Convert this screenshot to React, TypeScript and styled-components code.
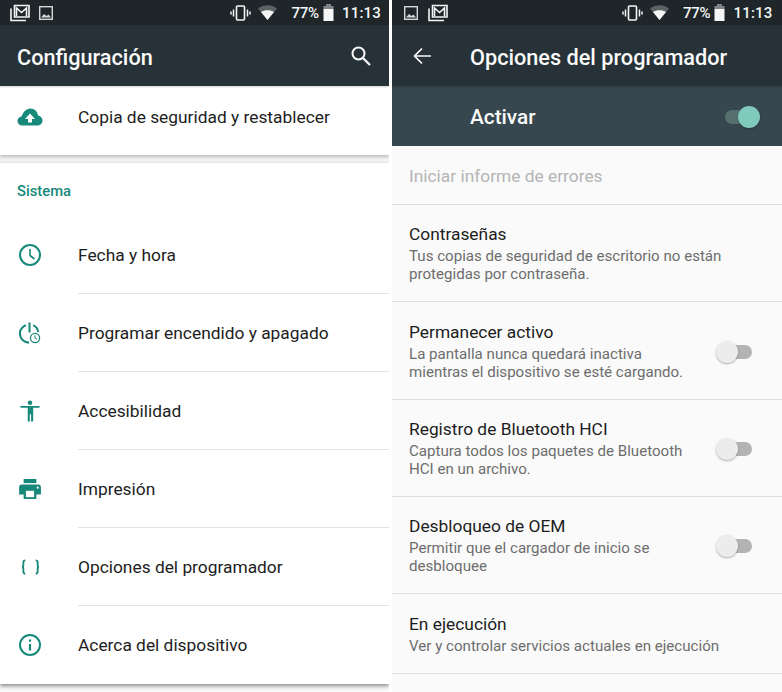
import React from 'react'
import styled, { createGlobalStyle } from 'styled-components'

const GlobalStyle = createGlobalStyle`
  html, body {
    margin: 0;
    padding: 0;
    background: #ffffff;
    font-family: Roboto, "Noto Sans", sans-serif;
  }
`

const TEAL = '#17897b'

const Page = styled.div`
  display: flex;
  justify-content: space-between;
  width: 782px;
  height: 692px;
  overflow: hidden;
`

const Phone = styled.div<{ $width: number; $bg: string }>`
  display: flex;
  flex-direction: column;
  width: ${(p) => p.$width}px;
  height: 692px;
  overflow: hidden;
  background: ${(p) => p.$bg};
`

const StatusBar = styled.div<{ $left: number; $right: number }>`
  display: flex;
  align-items: center;
  flex: none;
  height: 25px;
  padding: 0 ${(p) => p.$right}px 0 ${(p) => p.$left}px;
  background: #1f2629;
  color: #f4f6f6;
`

const NoteIcons = styled.div<{ $gap: number }>`
  display: flex;
  align-items: center;
  gap: ${(p) => p.$gap}px;
  flex: 1;
`

const Vibrate = styled.svg`
  width: 21px;
  height: 16px;
  margin-right: 7px;
`

const Wifi = styled.svg`
  width: 19px;
  height: 15px;
  margin-right: 14px;
`

const Percent = styled.span`
  font-size: 15px;
  font-weight: 500;
  letter-spacing: -0.2px;
`

const Battery = styled.svg`
  width: 11px;
  height: 17px;
  margin: 0 8px 0 4px;
`

const Clock = styled.span`
  font-size: 15px;
  font-weight: 500;
  letter-spacing: 0.2px;
`

const AppBar = styled.div`
  position: relative;
  z-index: 1;
  display: flex;
  align-items: center;
  flex: none;
  height: 61px;
  padding-left: 17px;
  padding-right: 16px;
  background: #263238;
  color: #fafafa;
  box-shadow: 0 1px 2px rgba(0, 0, 0, 0.18);
`

const AppTitle = styled.div`
  flex: 1;
  margin-top: 3px;
  font-size: 21.7px;
  font-weight: 500;
`

const BackSlot = styled.div`
  display: flex;
  align-items: center;
  width: 57px;
  margin-left: 4px;
`

const MasterBar = styled.div`
  display: flex;
  align-items: center;
  flex: none;
  height: 60px;
  box-sizing: border-box;
  padding: 2px 23px 0 78px;
  background: #37474f;
  color: #fafafa;
`

const MasterLabel = styled.div`
  flex: 1;
  font-size: 20.8px;
  font-weight: 500;
`

const Track = styled.div<{ $on?: boolean }>`
  position: relative;
  width: 34px;
  height: 14px;
  border-radius: 7px;
  background: ${(p) => (p.$on ? '#56706f' : '#b3b3b3')};
`

const OffTrack = styled(Track)`
  margin-top: 2px;
`

const Knob = styled.div<{ $on?: boolean }>`
  position: absolute;
  top: -4px;
  left: ${(p) => (p.$on ? '13px' : '-2px')};
  width: 22px;
  height: 22px;
  border-radius: 50%;
  background: ${(p) => (p.$on ? '#7fcabd' : '#ececec')};
  box-shadow: 0 1px 2px rgba(0, 0, 0, 0.3);
`

const CardGroup = styled.div`
  flex: none;
  background: #ffffff;
  box-shadow: 0 2px 3px rgba(0, 0, 0, 0.22);
`

const BottomCard = styled(CardGroup)`
  position: relative;
  box-shadow: 0 2px 4px rgba(0, 0, 0, 0.45);
`

const Spacer = styled.div`
  flex: 1;
  background: #f8f8f8;
`

const TopCard = styled(CardGroup)`
  height: 69px;
  box-sizing: border-box;
  padding-bottom: 7px;
  display: flex;
  align-items: center;
  margin-bottom: 8px;
`

const SectionHeader = styled.div`
  display: flex;
  align-items: center;
  height: 53px;
  box-sizing: border-box;
  padding: 2px 0 0 17px;
  font-size: 14.8px;
  font-weight: 500;
  color: ${TEAL};
`

const MenuRow = styled.div`
  display: flex;
  align-items: center;
  height: 78px;
`

const IconSlot = styled.div`
  display: flex;
  justify-content: center;
  align-items: center;
  flex: none;
  width: 60px;
  margin-right: 18px;
`

const MenuText = styled.div<{ $last?: boolean }>`
  display: flex;
  align-items: center;
  flex: 1;
  height: 100%;
  box-sizing: border-box;
  font-size: 17.35px;
  color: #1d1d1d;
  border-bottom: ${(p) => (p.$last ? 'none' : '1px solid #e2e2e2')};
`

const OptionList = styled.div`
  flex: 1;
  background: #fafafa;
`

const Option = styled.div<{ $height: number }>`
  display: flex;
  align-items: center;
  height: ${(p) => p.$height}px;
  box-sizing: border-box;
  padding: 0 30px 0 17px;
  border-bottom: 1px solid #e0e0e0;
`

const OptionBody = styled.div`
  flex: 1;
`

const OptionTitle = styled.div<{ $disabled?: boolean }>`
  font-size: 17.35px;
  line-height: 22px;
  margin: ${(p) => (p.$disabled ? '2px 0 0' : '0 0 2px')};
  color: ${(p) => (p.$disabled ? '#b4b4b4' : '#1d1d1d')};
`

const OptionSub = styled.div`
  font-size: 15.1px;
  line-height: 18px;
  color: #6d6d6d;
`

const MailIcon = () => (
  <svg width="20" height="18" viewBox="0 0 20 18" fill="none" stroke="#f4f6f6" strokeWidth="1.6">
    <path d="M4.5 1.5h14.5v11.5h-14.5z" />
    <path d="M6.5 12v-8l5 4.500 5-4.500v8" />
    <path d="M1 4.500v12h15" />
  </svg>
)

const PictureIcon = () => (
  <svg width="14" height="14" viewBox="0 0 14 14">
    <rect x="0.7" y="0.7" width="12.6" height="12.6" fill="none" stroke="#d5d8d8" strokeWidth="1.4" />
    <path d="M2 11.500l3-3.500 2.500 2 2-1.500 2.500 3z" fill="#d5d8d8" />
  </svg>
)

const StatusIcons = () => (
  <>
    <Vibrate viewBox="0 0 21 16" fill="none" stroke="#f4f6f6">
      <rect x="6.500" y="1" width="8" height="14" rx="1" strokeWidth="1.600" />
      <path d="M3.500 4.500v7M1 6.500v3M17.500 4.500v7M20 6.500v3" strokeWidth="1.500" />
    </Vibrate>
    <Wifi viewBox="0 0 19 15">
      <path d="M0 3.500C5 -1 14 -1 19 3.500L9.500 15z" fill="#5c6365" />
      <path d="M3 7C6.500 4.500 12.500 4.500 16 7L9.500 15z" fill="#f4f6f6" />
    </Wifi>
    <Percent>77%</Percent>
    <Battery viewBox="0 0 11 17">
      <rect x="3" y="0" width="5" height="2" fill="#7e8485" />
      <rect x="0.500" y="2" width="10" height="3" fill="#7e8485" />
      <rect x="0.500" y="5" width="10" height="12" fill="#f4f6f6" />
    </Battery>
    <Clock>11:13</Clock>
  </>
)

const SearchIcon = () => (
  <svg width="24" height="24" viewBox="0 0 24 24" fill="none" stroke="#fafafa" strokeWidth="2">
    <circle cx="9.500" cy="9.500" r="6" />
    <path d="M14 14l7 7" strokeWidth="2.200" />
  </svg>
)

const BackIcon = () => (
  <svg width="18" height="18" viewBox="0 0 18 18" fill="none" stroke="#fafafa" strokeWidth="1.700">
    <path d="M18 9H1.500M9 1.500L1.500 9l7.500 7.500" />
  </svg>
)

const CloudIcon = () => (
  <svg width="26" height="18" viewBox="0 0 26 18">
    <path d="M5.500 17.500C2.500 17.500 0.500 15.500 0.500 13 0.500 10.700 2.200 8.800 4.500 8.500 6 4.500 9 0.500 13.500 0.500c4 0 7 3 7.500 7 2.600 0.300 4.500 2.500 4.500 5 0 2.800-2.200 5-5 5z" fill={TEAL} />
    <path d="M13 5.500l-5 5.500h3v3.500h4v-3.500h3z" fill="#ffffff" />
  </svg>
)

const ClockIcon = () => (
  <svg width="24" height="24" viewBox="0 0 24 24" fill="none" stroke={TEAL} strokeWidth="2">
    <circle cx="12" cy="12" r="10" />
    <path d="M12 6v6.500l4.500 3.500" strokeWidth="1.600" />
  </svg>
)

const ScheduleIcon = () => (
  <svg width="22" height="22" viewBox="0 0 24 24" fill="none" stroke={TEAL} strokeWidth="2.200">
    <path d="M7.500 3.500C3.500 5.500 1 9 1 12.500 1 18 5.500 22.500 11 22.500" />
    <path d="M15.500 3.500C18.500 5 20.500 7.500 21 11" />
    <path d="M11.500 0.500v11" />
    <circle cx="17.500" cy="17.500" r="5" strokeWidth="1.400" />
    <path d="M17.500 14.500v3l2 1.500" strokeWidth="1.100" />
  </svg>
)

const AccessIcon = () => (
  <svg width="20" height="22" viewBox="0 0 22 24" fill={TEAL}>
    <circle cx="11" cy="3" r="2.500" />
    <path d="M0.500 6.500h21v2h-7v5v10h-2.300v-8h-1.400v8h-2.300v-15h-8z" />
  </svg>
)

const PrintIcon = () => (
  <svg width="22" height="20" viewBox="0 0 24 22" fill={TEAL}>
    <path d="M5 0h14v4.500H5z" />
    <path d="M3 6h18a3 3 0 0 1 3 3v8h-5v5H5v-5H0V9a3 3 0 0 1 3-3z" />
    <rect x="7.500" y="13" width="9" height="7" fill="#ffffff" />
    <circle cx="20.500" cy="9.500" r="1.200" fill="#ffffff" />
  </svg>
)

const BracesIcon = () => (
  <svg width="19" height="16" viewBox="0 0 20 16" fill="none" stroke={TEAL} strokeWidth="1.900">
    <path d="M4.500 1C3 1 2.500 1.700 2.500 3v3C2.500 7 2 8 1 8c1 0 1.500 1 1.500 2v3c0 1.300 0.500 2 2 2" />
    <path d="M15.500 1c1.500 0 2 0.700 2 2v3c0 1 0.500 2 1.500 2-1 0-1.500 1-1.500 2v3c0 1.300-0.500 2-2 2" />
  </svg>
)

const InfoIcon = () => (
  <svg width="24" height="24" viewBox="0 0 24 24" fill="none" stroke={TEAL} strokeWidth="2">
    <circle cx="12" cy="12" r="10" />
    <path d="M12 11v6.500" strokeWidth="2.200" />
    <path d="M12 6.500v2.200" strokeWidth="2.200" />
  </svg>
)

const menuRows = [
  { label: 'Fecha y hora', icon: <ClockIcon /> },
  { label: 'Programar encendido y apagado', icon: <ScheduleIcon /> },
  { label: 'Accesibilidad', icon: <AccessIcon /> },
  { label: 'Impresión', icon: <PrintIcon /> },
  { label: 'Opciones del programador', icon: <BracesIcon /> },
  { label: 'Acerca del dispositivo', icon: <InfoIcon /> }
]

const options = [
  {
    title: 'Contraseñas',
    sub: ['Tus copias de seguridad de escritorio no están', 'protegidas por contraseña.'],
    height: 97,
    toggle: false
  },
  {
    title: 'Permanecer activo',
    sub: ['La pantalla nunca quedará inactiva', 'mientras el dispositivo se esté cargando.'],
    height: 98,
    toggle: true
  },
  {
    title: 'Registro de Bluetooth HCI',
    sub: ['Captura todos los paquetes de Bluetooth', 'HCI en un archivo.'],
    height: 97,
    toggle: true
  },
  {
    title: 'Desbloqueo de OEM',
    sub: ['Permitir que el cargador de inicio se', 'desbloquee'],
    height: 97,
    toggle: true
  },
  {
    title: 'En ejecución',
    sub: ['Ver y controlar servicios actuales en ejecución'],
    height: 80,
    toggle: false
  }
]

const App: React.FC = () => {
  return (
    <Page>
      <GlobalStyle />
      <Phone $width={389} $bg="#f3f3f3">
        <StatusBar $left={10} $right={8}>
          <NoteIcons $gap={9}>
            <MailIcon />
            <PictureIcon />
          </NoteIcons>
          <StatusIcons />
        </StatusBar>
        <AppBar>
          <AppTitle>Configuración</AppTitle>
          <SearchIcon />
        </AppBar>
        <TopCard>
          <IconSlot>
            <CloudIcon />
          </IconSlot>
          <MenuText $last>Copia de seguridad y restablecer</MenuText>
        </TopCard>
        <BottomCard>
          <SectionHeader>Sistema</SectionHeader>
          {menuRows.map((row, idx) => (
            <MenuRow key={row.label}>
              <IconSlot>{row.icon}</IconSlot>
              <MenuText $last={idx === menuRows.length - 1}>{row.label}</MenuText>
            </MenuRow>
          ))}
        </BottomCard>
        <Spacer />
      </Phone>
      <Phone $width={390} $bg="#fafafa">
        <StatusBar $left={12} $right={9.5}>
          <NoteIcons $gap={10}>
            <PictureIcon />
            <MailIcon />
          </NoteIcons>
          <StatusIcons />
        </StatusBar>
        <AppBar>
          <BackSlot>
            <BackIcon />
          </BackSlot>
          <AppTitle>Opciones del programador</AppTitle>
        </AppBar>
        <MasterBar>
          <MasterLabel>Activar</MasterLabel>
          <Track $on>
            <Knob $on />
          </Track>
        </MasterBar>
        <OptionList>
          <Option $height={59}>
            <OptionBody>
              <OptionTitle $disabled>Iniciar informe de errores</OptionTitle>
            </OptionBody>
          </Option>
          {options.map((option) => (
            <Option key={option.title} $height={option.height}>
              <OptionBody>
                <OptionTitle>{option.title}</OptionTitle>
                {option.sub.map((line) => (
                  <OptionSub key={line}>{line}</OptionSub>
                ))}
              </OptionBody>
              {option.toggle && (
                <OffTrack>
                  <Knob />
                </OffTrack>
              )}
            </Option>
          ))}
        </OptionList>
      </Phone>
    </Page>
  )
}

export default App
